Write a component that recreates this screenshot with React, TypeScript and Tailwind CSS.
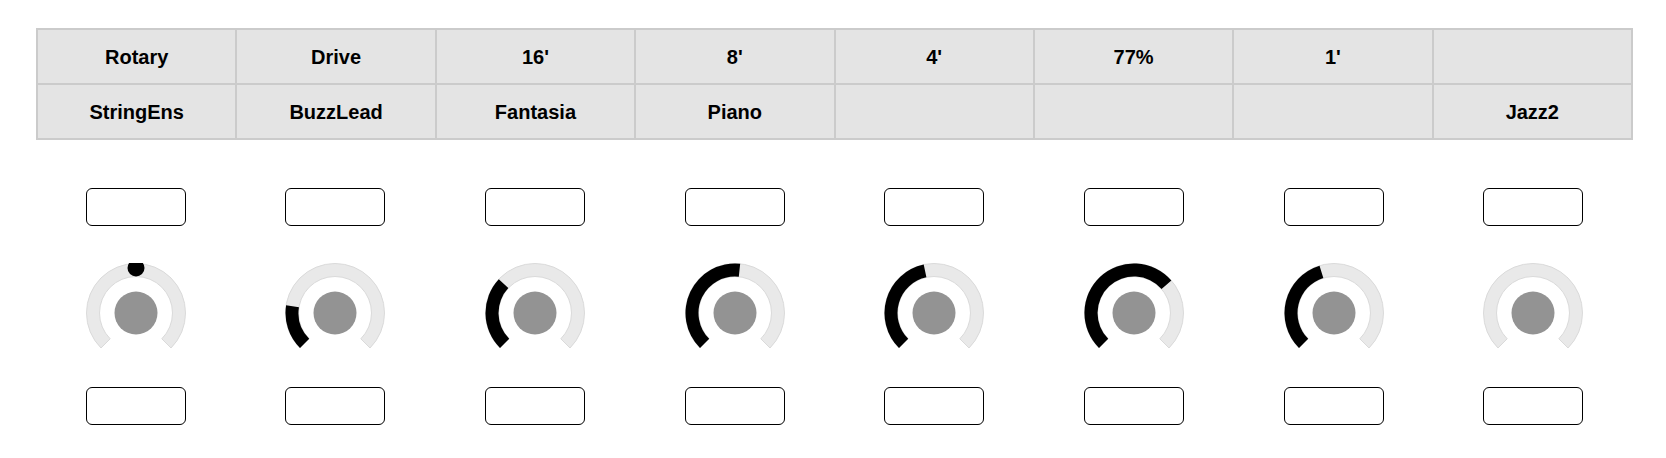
import React from "react";

const TOP_ROW = ["Rotary", "Drive", "16'", "8'", "4'", "77%", "1'", ""];
const BOTTOM_ROW = ["StringEns", "BuzzLead", "Fantasia", "Piano", "", "", "", "Jazz2"];

// value angle in degrees from top, clockwise; null = no value arc
const KNOBS: { value: number | null; dot?: boolean }[] = [
  { value: null, dot: true },
  { value: -81 },
  { value: -47 },
  { value: 6 },
  { value: -12 },
  { value: 49 },
  { value: -17 },
  { value: null },
];

function pt(r: number, deg: number) {
  const a = (deg * Math.PI) / 180;
  return `${(50 + r * Math.sin(a)).toFixed(2)} ${(50 - r * Math.cos(a)).toFixed(2)}`;
}

function sector(a0: number, a1: number, r0: number, r1: number) {
  const large = a1 - a0 > 180 ? 1 : 0;
  return [
    `M ${pt(r1, a0)}`,
    `A ${r1} ${r1} 0 ${large} 1 ${pt(r1, a1)}`,
    `L ${pt(r0, a1)}`,
    `A ${r0} ${r0} 0 ${large} 0 ${pt(r0, a0)}`,
    "Z",
  ].join(" ");
}

function Knob({ value, dot }: { value: number | null; dot?: boolean }) {
  return (
    <svg width="100" height="100" viewBox="0 0 100 100">
      <path d={sector(-135, 135, 36.5, 49.5)} fill="#e9e9e9" stroke="#dadada" strokeWidth="1" />
      {value !== null && <path d={sector(-135, value, 36.5, 49.5)} fill="#000" />}
      {dot && <circle cx="50" cy="5" r="8.5" fill="#000" />}
      <circle cx="50" cy="50" r="21.5" fill="#939393" />
    </svg>
  );
}

function Box() {
  return <div className="h-[38px] w-[100px] rounded-[6px] border-[1.5px] border-black bg-white" />;
}

export default function App() {
  const cellCls =
    "h-[55px] border-2 border-[#cbcbcb] bg-[#e4e4e4] text-center align-middle text-[20px] font-bold text-black";

  return (
    <div
      className="h-[458px] w-[1666px] bg-white pt-[28px] pl-[36px]"
      style={{ fontFamily: '"Liberation Sans", Arial, sans-serif' }}
    >
      <div className="w-[1597px]">
        {/* Registration table */}
        <table className="w-full table-fixed border-collapse">
          <tbody>
            <tr>
              {TOP_ROW.map((t, i) => (
                <td key={i} className={cellCls}>
                  {t}
                </td>
              ))}
            </tr>
            <tr>
              {BOTTOM_ROW.map((t, i) => (
                <td key={i} className={cellCls}>
                  {t}
                </td>
              ))}
            </tr>
          </tbody>
        </table>

        {/* Knobs */}
        <div className="mt-[48px] grid grid-cols-8">
          {KNOBS.map((k, i) => (
            <div key={i} className="flex flex-col items-center">
              <Box />
              <div className="mt-[37px]">
                <Knob value={k.value} dot={k.dot} />
              </div>
              <div className="mt-[24px]">
                <Box />
              </div>
            </div>
          ))}
        </div>
      </div>
    </div>
  );
}
